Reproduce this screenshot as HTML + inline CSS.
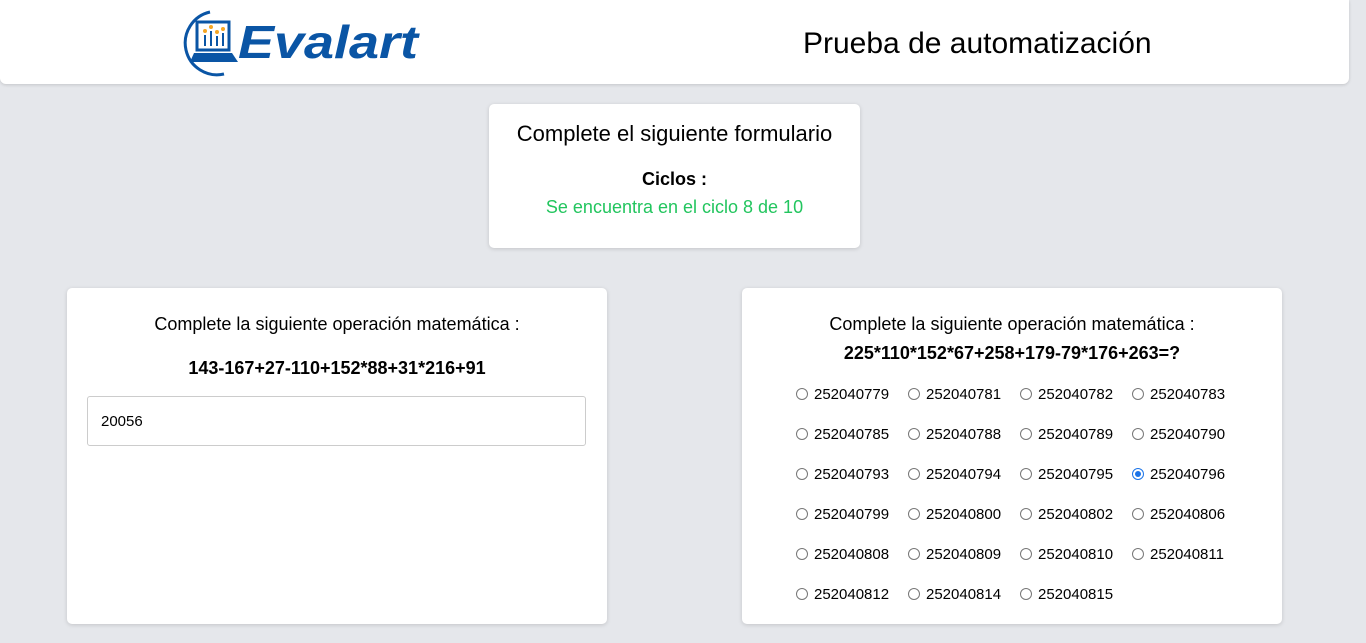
<!DOCTYPE html><html><head><style>
body{margin:0;background:#e5e7eb;font-family:"Liberation Sans",sans-serif;width:1366px;height:643px;overflow:hidden;position:relative;color:#000}
.hdr{position:absolute;left:0;top:0;width:1349px;height:84px;background:#fff;border-radius:0 0 6px 6px;box-shadow:0 1px 3px rgba(0,0,0,.15)}
.card{position:absolute;background:#fff;border-radius:5px;box-shadow:0 1px 4px rgba(0,0,0,.15)}
.r{position:absolute;font-size:15px;line-height:18px}
.r i{position:absolute;left:-18px;top:2px;width:10px;height:10px;border:1.5px solid #777;border-radius:50%}
.r i.on{border-color:#1a73e8}
.r i.on:after{content:"";position:absolute;left:2px;top:2px;width:6px;height:6px;border-radius:50%;background:#1a73e8}
</style></head><body>
<div class="hdr">
<svg style="position:absolute;left:180px;top:8px" width="245" height="70" viewBox="0 0 245 70">
<path d="M30 4 A30 30 0 1 0 44 66" fill="none" stroke="#0a55a5" stroke-width="3"/>
<rect x="17" y="14" width="32" height="28" fill="none" stroke="#0a55a5" stroke-width="3"/>
<rect x="24" y="27" width="2" height="11" fill="#0a55a5"/><rect x="30" y="23" width="2" height="15" fill="#0a55a5"/><rect x="36" y="28" width="2" height="10" fill="#0a55a5"/><rect x="42" y="25" width="2" height="13" fill="#0a55a5"/>
<circle cx="25" cy="23" r="2" fill="#f5a623"/><circle cx="31" cy="19" r="2" fill="#f5a623"/><circle cx="37" cy="24" r="2" fill="#f5a623"/><circle cx="43" cy="21" r="2" fill="#f5a623"/>
<path d="M14 45 H52 L58 54 H10 Z" fill="#0a55a5"/>
<text x="58" y="50" font-family="Liberation Sans" font-style="italic" font-weight="bold" font-size="46" fill="#0a55a5" textLength="180" lengthAdjust="spacingAndGlyphs">Evalart</text>
</svg>
<div style="position:absolute;left:803px;top:27px;font-size:30px">Prueba de automatización</div>
</div>
<div class="card" style="left:489px;top:104px;width:371px;height:144px;text-align:center">
<div style="margin-top:17px;font-size:22px">Complete el siguiente formulario</div>
<div style="margin-top:22px;font-size:18px;font-weight:bold">Ciclos :</div>
<div style="margin-top:7px;font-size:18px;color:#22c55e">Se encuentra en el ciclo 8 de 10</div>
</div>
<div class="card" style="left:67px;top:288px;width:540px;height:336px;text-align:center">
<div style="margin-top:26px;font-size:18px">Complete la siguiente operación matemática :</div>
<div style="margin-top:23px;font-size:18px;font-weight:bold">143-167+27-110+152*88+31*216+91</div>
<div style="position:absolute;left:20px;top:108px;width:484px;height:48px;border:1px solid #ccc;border-radius:3px;text-align:left;padding-left:13px;line-height:50px;font-size:15px">20056</div>
</div>
<div class="card" style="left:742px;top:288px;width:540px;height:336px;text-align:center">
<div style="margin-top:26px;font-size:18px">Complete la siguiente operación matemática :</div>
<div style="margin-top:8px;font-size:18px;font-weight:bold">225*110*152*67+258+179-79*176+263=?</div>
</div>
<div id="rs"></div>
<script>
var v=["252040779","252040781","252040782","252040783","252040785","252040788","252040789","252040790","252040793","252040794","252040795","252040796","252040799","252040800","252040802","252040806","252040808","252040809","252040810","252040811","252040812","252040814","252040815"],h="";
v.forEach(function(t,i){var c=i%4,r=Math.floor(i/4);h+='<div class="r" style="left:'+(814+c*112)+'px;top:'+(386+r*40)+'px"><i'+(i==11?' class="on"':'')+'></i>'+t+'</div>';});
document.getElementById("rs").innerHTML=h;
</script>
</body></html>
